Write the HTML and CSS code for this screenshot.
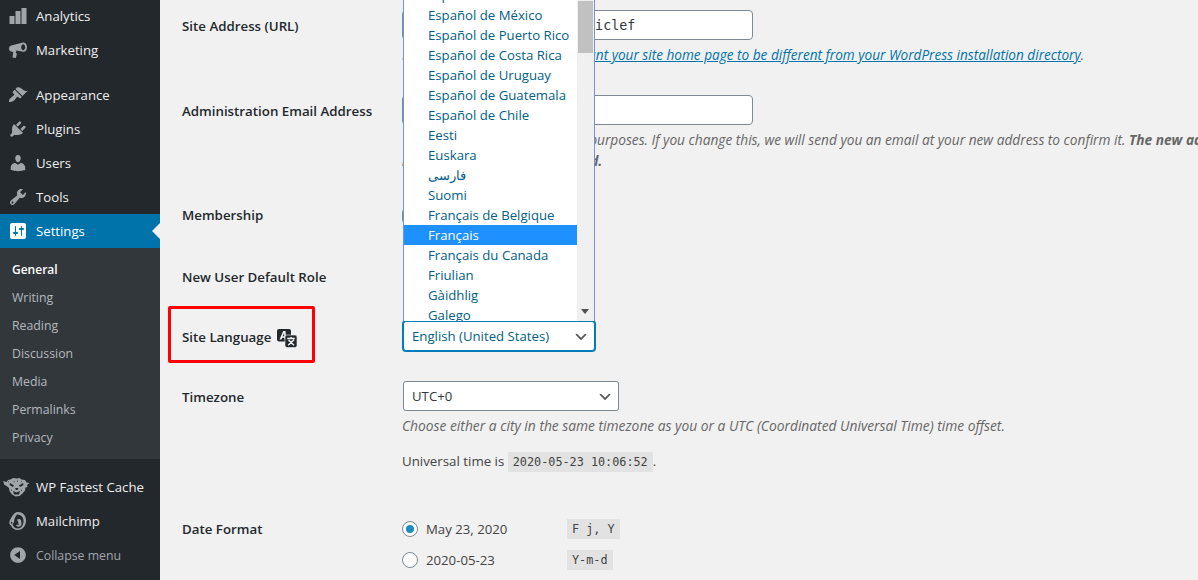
FILE: index.html
```html
<!DOCTYPE html>
<html lang="en">
<head>
<meta charset="utf-8">
<title>General Settings</title>
<link rel="stylesheet" href="styles.css">
</head>
<body>
<div class="app">
  <aside class="sidebar">
    <ul class="menu">
      <li class="item"><svg class="ico" viewBox="0 0 20 20"><path d="M1.500 10h5v8h-5zM7.500 5h5v13h-5zM13.500 2h5v16h-5z"/></svg>Analytics</li>
      <li class="item"><svg class="ico" viewBox="0 0 20 20"><path d="M15 2.500c2.300-.7 4 2 4 4.700s-1.700 5-4 4.500L8.500 10.500 7.700 13l1.300.6-1.200 4.400-3.300-.6.800-5.200L3 11.500C1.500 11 1 9.700 1 8.500s.7-2.500 2.200-2.900zm0 1.700c-1 .3-1.800 1.500-1.800 3s.8 2.800 1.800 3 2.200-1.300 2.200-3-1.200-3.300-2.200-3z"/></svg>Marketing</li>
      <li class="item sep"><svg class="ico" viewBox="0 0 20 20"><path d="M14.480 11.060L7.410 3.990l1.500-1.500c.5-.56 2.300-.47 3.510.32 1.210.8 1.430 1.280 2.910 2.100 1.180.64 2.450 1.260 4.450.85zm-.71.71L6.700 4.700 4.930 6.470c-.39.39-.39 1.020 0 1.410l1.060 1.060c.39.39.39 1.030 0 1.420-.6.6-1.430 1.110-2.210 1.690-.35.26-.7.53-1.010.84C1.430 13.230.99 14.750 1 17c1.010.01 1.790-.02 3.190-.54.750-.28 1.530-.63 2.220-1.310.29-.29.56-.6.83-.94.58-.78 1.090-1.610 1.690-2.210.39-.39 1.030-.39 1.420 0l1.060 1.060c.39.39 1.020.39 1.410 0z"/></svg>Appearance</li>
      <li class="item"><svg class="ico" viewBox="0 0 20 20"><path d="M13.110 4.360L9.870 7.600 8 5.730l3.240-3.240c.35-.34 1.050-.2 1.560.32.52.51.66 1.210.31 1.550zm-8 1.770l.91-1.120 9.010 9.010-1.190.84c-.71.71-2.630 1.160-3.820 1.160H6.140L4.900 17.260c-.59.59-1.540.59-2.120 0-.59-.58-.59-1.530 0-2.120l1.240-1.240v-3.880c0-1.130.4-3.190 1.090-3.890zm7.260 3.970l3.240-3.240c.34-.35 1.040-.21 1.550.31.52.51.66 1.210.31 1.550l-3.240 3.250z"/></svg>Plugins</li>
      <li class="item"><svg class="ico" viewBox="0 0 20 20"><path d="M10 9.250c-2.270 0-2.730-3.440-2.730-3.440C7 4.020 7.820 2 9.970 2c2.160 0 2.980 2.020 2.710 3.810 0 0-.41 3.440-2.680 3.440zm0 2.570L12.720 10c2.390 0 4.520 2.330 4.520 4.530v2.490s-3.650 1.130-7.240 1.130c-3.650 0-7.240-1.130-7.240-1.130v-2.490c0-2.250 1.940-4.480 4.470-4.480z"/></svg>Users</li>
      <li class="item"><svg class="ico" viewBox="0 0 20 20"><path d="M16.680 9.770c-1.340 1.340-3.300 1.670-4.950.99l-5.410 6.520c-.99.99-2.590.99-3.580 0s-.99-2.590 0-3.570l6.520-5.420c-.68-1.650-.35-3.610.99-4.950 1.280-1.280 3.120-1.620 4.720-1.060l-2.890 2.890 2.820 2.820 2.860-2.870c.53 1.580.18 3.390-1.080 4.650zM3.810 16.210c.4.39 1.040.39 1.430 0 .4-.4.4-1.040 0-1.430-.39-.4-1.030-.4-1.430 0-.39.39-.39 1.030 0 1.430z"/></svg>Tools</li>
      <li class="item active"><svg class="ico" viewBox="0 0 20 20"><path d="M18 16V4c0-1.100-.9-2-2-2H4c-1.100 0-2 .9-2 2v12c0 1.100.9 2 2 2h12c1.100 0 2-.9 2-2zM8 11h1c.55 0 1 .45 1 1s-.45 1-1 1H8v1.500c0 .28-.22.5-.5.5s-.5-.22-.5-.5V13H6c-.55 0-1-.45-1-1s.45-1 1-1h1V5.500c0-.28.22-.5.5-.5s.5.22.5.5V11zm5-2h-1c-.55 0-1-.45-1-1s.45-1 1-1h1V5.500c0-.28.22-.5.5-.5s.5.22.5.5V7h1c.55 0 1 .45 1 1s-.45 1-1 1h-1v5.500c0 .28-.22.5-.5.5s-.5-.22-.5-.5V9z"/></svg>Settings</li>
      <li class="submenu">
        <div class="sub current">General</div>
        <div class="sub">Writing</div>
        <div class="sub">Reading</div>
        <div class="sub">Discussion</div>
        <div class="sub">Media</div>
        <div class="sub">Permalinks</div>
        <div class="sub">Privacy</div>
      </li>
      <li class="item sep"><svg class="ico big" viewBox="0 0 28 20"><path d="M1 4 4.500 5 6 3l2.500-.5L11 1l4 .5 2.500-.5 2 1.500L23 3l1.500 2.500L27.500 6l-2.500 2 .5 2-2 .5-.5 3-2.500 3-3 2.500-4 .5-3.500-2-2.500-3.500L7 11 4 8.500 2.500 8z"/><path class="cut" d="M8 6l4 2.500-1 1.500-3.500-2zM21 6l-4 2.500 1 1.500 3.500-2zM13 11h3.500l-1 2h-1.500zM11 14l3.500 1.500 3.500-1.500-1 3.500h-5zM6 4l1 1-1 .5zM15 3l1 1.500-1 .5zM12 3.500l.7 1.500-1 .2zM19 3.500l.8 1-.8.5zM9 12l1 1.500-1 .5zM20 12l-1 1.500 1 .5z"/></svg>WP Fastest Cache</li>
      <li class="item"><svg class="ico" viewBox="0 0 20 20"><path d="M10 1c4.500 0 8 3 8 8.500 0 5.500-3.500 9.500-8 9.500-3.500 0-6-1.700-7-4.500C1.500 13.500 1 12 1.500 10.500 2 9 3 7 4 5.500 5.500 3 7.500 1 10 1z"/><path class="cut" d="M9 3.500c3 0 6.500 2 6.500 6.500 0 4.500-2.500 7.500-5.500 7.500-2.500 0-4-1-5-3-.7-1.300-.3-2.500 1-3 0-2.500 1-6 3-8zM3.500 10.500c-.7.7-.7 1.800 0 2.500l1-1.500z"/><path d="M9 8.500c1.500-1 3.500-.7 4 .5l.5 3c.3 1.500-.5 3.500-2.500 3.800-1.500.2-2.500-.6-3-1.800l1.500-.5c.5.7 1 1 1.700.8-.7-.5-1-1.500-.7-2.300z"/></svg>Mailchimp</li>
      <li class="item collapse"><svg class="ico" viewBox="0 0 20 20"><path d="M10 2.160c4.330 0 7.840 3.510 7.840 7.840s-3.510 7.840-7.840 7.840S2.160 14.330 2.160 10 5.710 2.160 10 2.160zm2 11.720V6.120L6.180 9.970z"/></svg>Collapse menu</li>
    </ul>
  </aside>

  <main class="content">
    <section class="row r1">
      <div class="label">Site Address (URL)</div>
      <div class="field">
        <input class="text mono" type="text" value="http://www.example.co/ticlef">
        <p class="desc">Enter the address here if you <a href="#">want your site home page to be different from your WordPress installation directory</a>.</p>
      </div>
    </section>
    <section class="row r2">
      <div class="label">Administration Email Address</div>
      <div class="field">
        <input class="text" type="text" value="contacts@example-ticlef.com">
        <p class="desc">This address is used for admin purposes. If you change this, we will send you an email at your new address to confirm it. <strong>The new address will not<br>become active until confirmed.</strong></p>
      </div>
    </section>
    <section class="row r3">
      <div class="label">Membership</div>
      <div class="field"><span class="check"></span></div>
    </section>
    <section class="row r4">
      <div class="label">New User Default Role</div>
      <div class="field"></div>
    </section>
    <section class="row r5">
      <div class="label">Site Language <svg class="lang" viewBox="0 0 20 19"><rect x="0" y="0" width="14" height="12.500" rx="2"/><path class="lang-a" d="M2.500 10.500 6.200 2h2.300l.8 8.500H7.500l-.1-1.800H5.200l-.8 1.800zm3.300-3.300h1.500L7 4z"/><rect class="lang-box" x="8" y="6" width="12" height="12.500" rx="2"/><path class="lang-x" d="M10.200 9.500h7.600M14 8v1.500M11.200 16.200l5.800-5.400M11.500 11l5.500 5.200"/></svg>
        <span class="callout"></span>
      </div>
      <div class="field">
        <div class="select-wrap">
          <select class="select focus"><option>English (United States)</option></select>
          <div class="dropdown">
            <ul class="options">
              <li>Español</li>
              <li>Español de México</li>
              <li>Español de Puerto Rico</li>
              <li>Español de Costa Rica</li>
              <li>Español de Uruguay</li>
              <li>Español de Guatemala</li>
              <li>Español de Chile</li>
              <li>Eesti</li>
              <li>Euskara</li>
              <li>فارسی</li>
              <li>Suomi</li>
              <li>Français de Belgique</li>
              <li class="picked">Français</li>
              <li>Français du Canada</li>
              <li>Friulian</li>
              <li>Gàidhlig</li>
              <li>Galego</li>
            </ul>
            <div class="scrollbar"><span class="thumb"></span><span class="down"></span></div>
          </div>
        </div>
      </div>
    </section>
    <section class="row r6">
      <div class="label">Timezone</div>
      <div class="field">
        <select class="select tz"><option>UTC+0</option></select>
        <p class="desc wide">Choose either a city in the same timezone as you or a UTC (Coordinated Universal Time) time offset.</p>
        <p class="utc">Universal time is <code>2020-05-23 10:06:52</code>.</p>
      </div>
    </section>
    <section class="row r7">
      <div class="label">Date Format</div>
      <div class="field">
        <div class="date"><span class="radio on"></span><span class="date-text">May 23, 2020</span><code>F j, Y</code></div>
        <div class="date"><span class="radio"></span><span class="date-text">2020-05-23</span><code>Y-m-d</code></div>
      </div>
    </section>
  </main>
</div>
</body>
</html>
```
FILE: styles.css
```css
* { box-sizing: border-box; }
html, body { margin: 0; height: 580px; overflow: hidden; }
body { background: #f1f1f1; color: #444; font-family: "Open Sans", "Noto Sans", sans-serif; font-size: 13px; }
.app { display: flex; height: 580px; overflow: hidden; }

.sidebar { flex: 0 0 160px; background: #23282d; overflow: hidden; }
.menu { list-style: none; margin: -1px 0 0; padding: 0; }
.item { display: flex; align-items: center; height: 34px; color: #eee; font-size: 13.200px; position: relative; }
.item.sep { margin-top: 11px; }
.ico { width: 20px; height: 20px; margin: 0 8px; flex: none; fill: #a0a5aa; }
.ico.big { width: 28px; margin: 0 6px 0 2px; }
.ico .cut { fill: #23282d; }
.active { background: #0073aa; color: #fff; }
.active .ico { fill: #fff; }
.active::after { content: ""; position: absolute; right: 0; top: 9px; border: 8px solid transparent; border-left: 0; border-right-color: #f1f1f1; }
.collapse { color: #a0a5aa; font-size: 12.300px; }
.submenu { background: #32373c; padding: 8px 0 7px; }
.sub { height: 28px; line-height: 28px; padding-left: 12px; font-size: 12.300px; color: #b4b9be; }
.sub.current { color: #fff; font-weight: 600; font-size: 12px; }

.content { flex: 1; min-width: 0; margin-top: -5px; padding-left: 22px; overflow: visible; }
.row { display: flex; }
.r1 { height: 85px; } .r2 { height: 104px; } .r3 { height: 62px; } .r4 { height: 60px; }
.r5 { height: 60px; } .r6 { height: 132px; }
.label { flex: 0 0 220px; padding-top: 22px; line-height: 18px; font-size: 13.300px; font-weight: 540; color: #23282d; position: relative; }
.field { flex: 1; min-width: 0; padding-top: 15px; white-space: nowrap; }

.text { display: block; width: 351px; height: 30px; padding: 0 8px; border: 1px solid #7e8993; border-radius: 4px; background: #fff; color: #32373c; font: 13.200px "Open Sans", sans-serif; }
.mono { font: 13.300px "DejaVu Sans Mono", monospace; }
.desc { margin: 4px 0 0; line-height: 21px; font-size: 13.700px; font-style: italic; color: #666; }
.desc.wide { font-size: 13.800px; }
.desc a { color: #0073aa; font-size: 13.620px; }
.desc strong { font-weight: 700; }
.utc { margin: 15px 0 0; line-height: 21px; font-size: 13.300px; color: #444; }
code { background: #e2e2e2; padding: 3px 5px; font: 11.800px "DejaVu Sans Mono", monospace; color: #444; }
.check { display: block; width: 16px; height: 16px; margin-top: 9px; border: 1px solid #7e8993; border-radius: 4px; background: #fff; }

.select { display: block; height: 30px; padding: 0 24px 0 8px; border: 1px solid #7e8993; border-radius: 3px; background: #fff url("data:image/svg+xml;charset=US-ASCII,%3Csvg%20width%3D%2220%22%20height%3D%2220%22%20xmlns%3D%22http%3A%2F%2Fwww.w3.org%2F2000%2Fsvg%22%3E%3Cpath%20d%3D%22M5%206l5%205%205-5%202%201-7%207-7-7%202-1z%22%20fill%3D%22%23555%22%2F%3E%3C%2Fsvg%3E") no-repeat right 5px top 55%; background-size: 16px 16px; appearance: none; font: 13.200px "Open Sans", sans-serif; color: #32373c; }
.select.focus { width: 192px; margin-left: 1px; color: #016087; border-color: #007cba; box-shadow: 0 0 0 1px #007cba; }
.select.tz { width: 216px; margin-left: 1px; }
.select-wrap { position: relative; }
.dropdown { position: absolute; left: 1px; bottom: 30px; width: 192px; height: 336px; background: #fff; border: 1px solid #6f97d8; border-width: 0 1px; overflow: hidden; }
.options { list-style: none; margin: 0; padding: 0; }
.options li { height: 20px; line-height: 20px; padding-left: 24px; width: 173px; font-size: 13.200px; color: #016087; }
.options .picked { background: #1e90ff; color: #fff; }
.scrollbar { position: absolute; top: 0; right: 0; bottom: 0; width: 17px; background: #f0f0f0; }
.thumb { position: absolute; top: 16px; left: 1px; right: 1px; height: 52px; background: #c1c1c1; }
.down { position: absolute; left: 4px; bottom: 7px; border: 4.500px solid transparent; border-bottom: 0; border-top: 5px solid #505050; }

.callout { position: absolute; left: -14px; top: 0; width: 147px; height: 57px; border: 3px solid #f00; border-radius: 2px; }
.lang { display: inline-block; width: 20px; height: 19px; vertical-align: -6px; margin-left: 2px; }
.lang rect { fill: #23282d; }
.lang .lang-a { fill: #f1f1f1; }
.lang .lang-box { stroke: #f1f1f1; stroke-width: .6; }
.lang .lang-x { fill: none; stroke: #f1f1f1; stroke-width: 1.500; }

.date { display: flex; align-items: center; height: 31px; }
.radio { flex: none; width: 16px; height: 16px; border: 1px solid #7e8993; border-radius: 50%; background: #fff; margin-right: 8px; display: flex; align-items: center; justify-content: center; }
.radio.on::before { content: ""; width: 8px; height: 8px; border-radius: 50%; background: #1e8cbe; }
.date-text { flex: 0 0 141px; font-size: 13.200px; color: #444; }
```
